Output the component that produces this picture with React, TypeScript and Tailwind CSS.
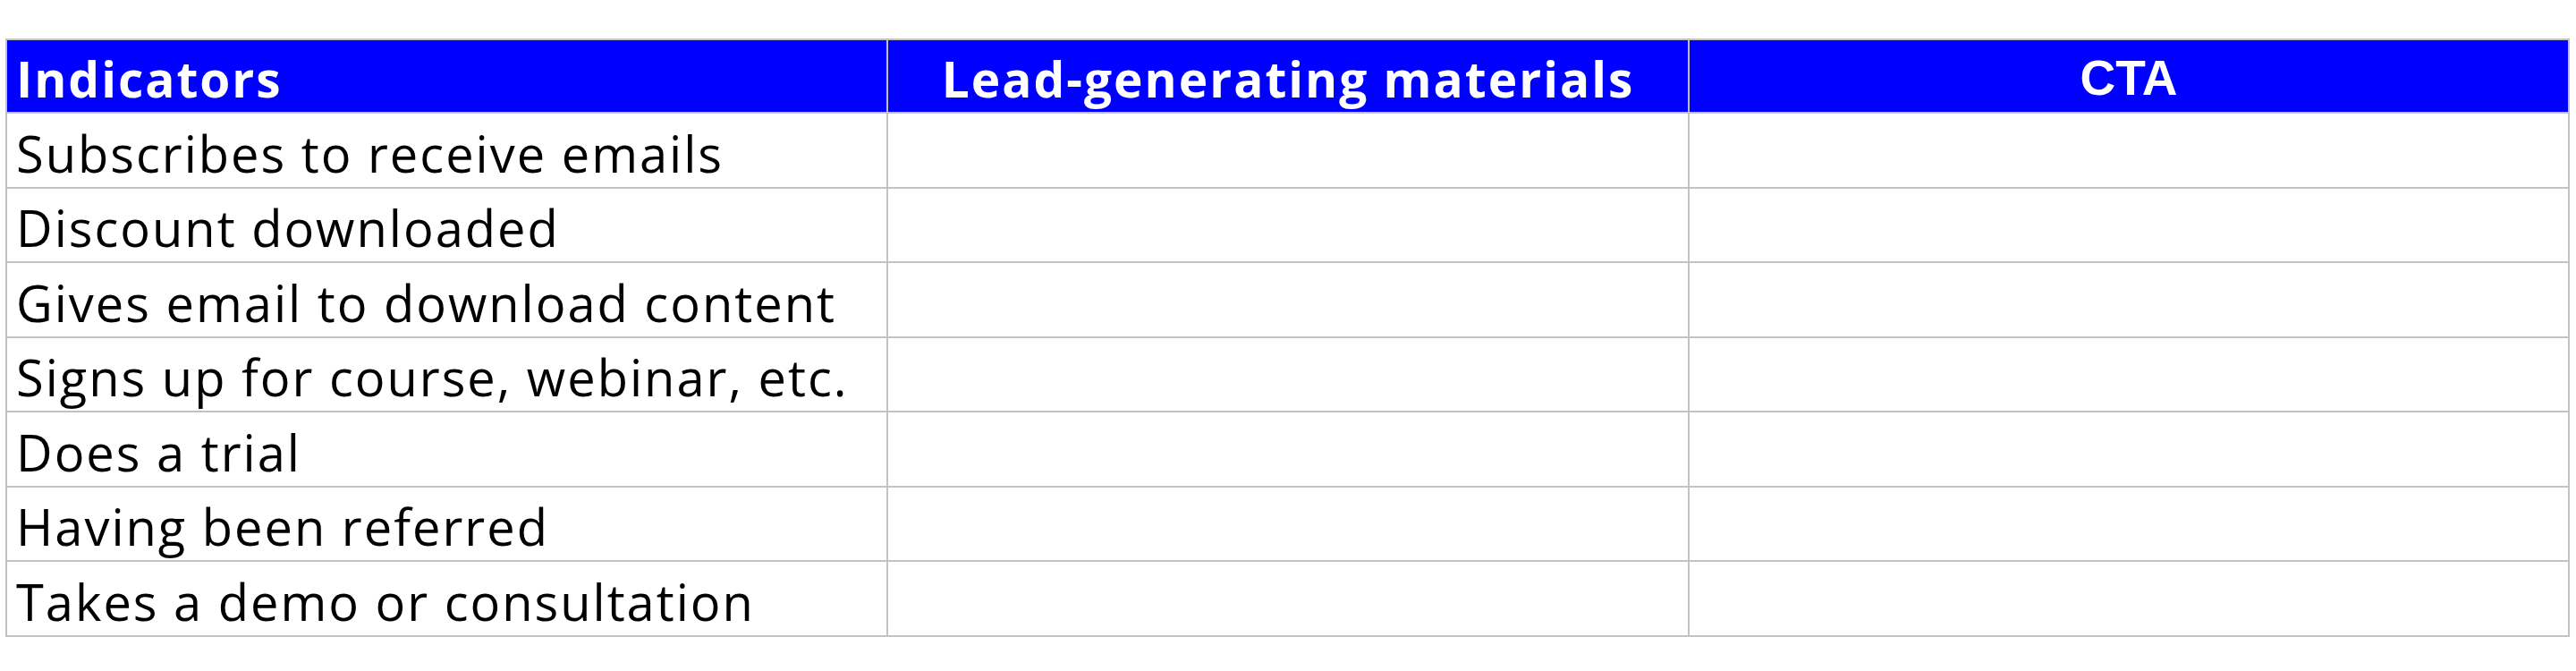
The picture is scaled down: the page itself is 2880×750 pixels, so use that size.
const headers = [
  { label: 'Indicators', align: 'text-left', font: "font-['Open_Sans',sans-serif] tracking-[2px]" },
  { label: 'Lead-generating materials', align: 'text-center', font: "font-['Open_Sans',sans-serif] tracking-[2px]" },
  { label: 'CTA', align: 'text-center', font: "font-['Liberation_Sans',Arial,sans-serif]" },
];

const indicators = [
  'Subscribes to receive emails',
  'Discount downloaded',
  'Gives email to download content',
  'Signs up for course, webinar, etc.',
  'Does a trial',
  'Having been referred',
  'Takes a demo or consultation',
];

export default function App() {
  return (
    <div className="w-[2880px] h-[750px] bg-white pt-[43px] pl-[6px]">
      <table className="table-fixed border-collapse w-[2865px] font-['Open_Sans',sans-serif] text-black">
        <colgroup>
          <col className="w-[985px]" />
          <col className="w-[896px]" />
          <col className="w-[984px]" />
        </colgroup>
        <thead>
          <tr className="h-[82px] bg-[#0000ff]">
            {headers.map((h) => (
              <th
                key={h.label}
                className={`border-2 border-[#c2c2c2] px-[10px] pt-[4px] align-middle text-white font-bold text-[55px] leading-none ${h.align} ${h.font}`}
              >
                {h.label}
              </th>
            ))}
          </tr>
        </thead>
        <tbody>
          {indicators.map((item) => (
            <tr key={item} className="h-[83.5px]">
              <td className="border-2 border-[#c2c2c2] px-[10px] pt-[6px] align-middle text-[56px] leading-none tracking-[2px] whitespace-nowrap">
                {item}
              </td>
              <td className="border-2 border-[#c2c2c2]" />
              <td className="border-2 border-[#c2c2c2]" />
            </tr>
          ))}
        </tbody>
      </table>
    </div>
  );
}
